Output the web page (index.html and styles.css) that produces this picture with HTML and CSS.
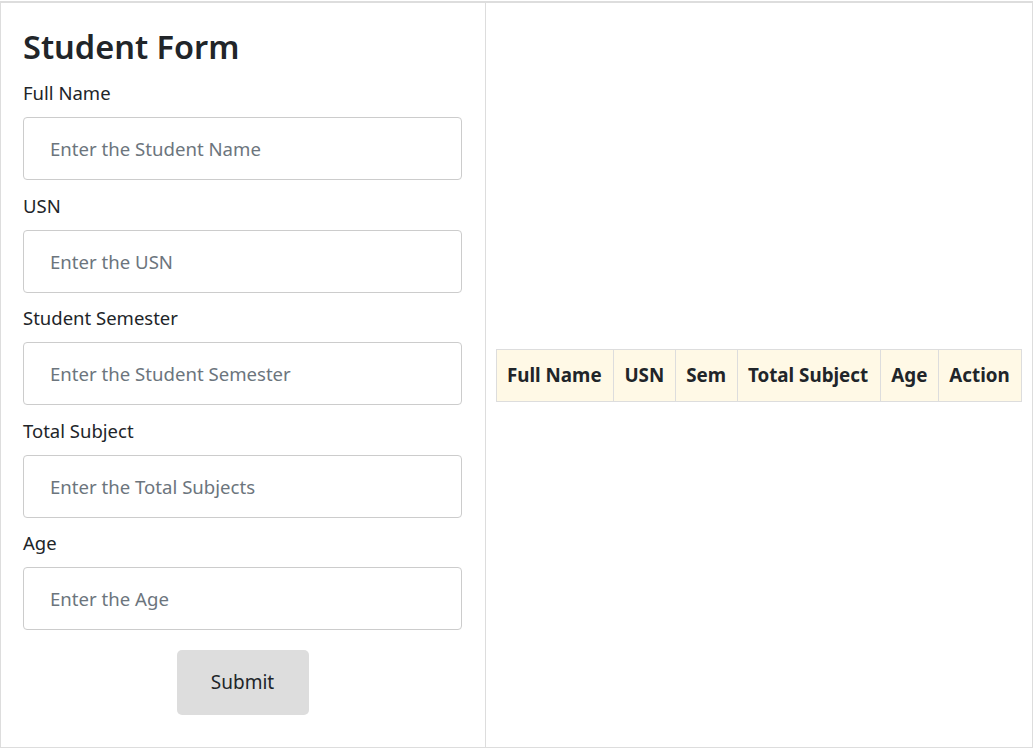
FILE: index.html
```html
<!DOCTYPE html>
<html>
<head>
<meta charset="utf-8">
<link rel="stylesheet" href="styles.css">
</head>
<body>
<div class="app">
  <div class="form-col">
    <h1 class="title">Student Form</h1>
    <div class="field">
      <label class="label">Full Name</label>
      <input class="input" type="text" placeholder="Enter the Student Name">
    </div>
    <div class="field">
      <label class="label">USN</label>
      <input class="input" type="text" placeholder="Enter the USN">
    </div>
    <div class="field">
      <label class="label">Student Semester</label>
      <input class="input" type="text" placeholder="Enter the Student Semester">
    </div>
    <div class="field">
      <label class="label">Total Subject</label>
      <input class="input" type="text" placeholder="Enter the Total Subjects">
    </div>
    <div class="field">
      <label class="label">Age</label>
      <input class="input" type="text" placeholder="Enter the Age">
    </div>
    <div class="actions">
      <button class="btn">Submit</button>
    </div>
  </div>
  <div class="table-col">
    <table class="table">
      <thead>
        <tr>
          <th>Full Name</th>
          <th>USN</th>
          <th>Sem</th>
          <th>Total Subject</th>
          <th>Age</th>
          <th>Action</th>
        </tr>
      </thead>
    </table>
  </div>
</div>
</body>
</html>
```
FILE: styles.css
```css
* { box-sizing: border-box; }
html, body { margin: 0; padding: 0; background: #fff; }
body {
  font-family: "Noto Sans", "Open Sans", sans-serif;
  color: #212529;
}
.app {
  margin-top: 1px;
  width: 1033px;
  height: 747px;
  border: 1px solid #ddd;
  border-top-width: 2px;
  display: flex;
}
.form-col {
  width: 485px;
  border-right: 1px solid #ddd;
  padding: 22px 23px 0 22px;
  display: flex;
  flex-direction: column;
}
.title {
  margin: 0 0 12px 0;
  font-size: 32.5px;
  font-weight: 600;
  line-height: 44px;
  color: #212529;
}
.field {
  display: flex;
  flex-direction: column;
  margin-bottom: 13.5px;
}
.label {
  font-size: 18.5px;
  line-height: 24px;
  margin-bottom: 12px;
}
.input {
  height: 63px;
  width: 439px;
  border: 1px solid #ccc;
  border-radius: 4px;
  padding: 0 26px;
  font-family: inherit;
  font-size: 18.6px;
  color: #212529;
}
.input::placeholder { color: #6c757d; }
.actions {
  display: flex;
  justify-content: center;
  padding-top: 6px;
}
.btn {
  width: 132px;
  height: 65px;
  border: none;
  border-radius: 5px;
  background: #ddd;
  font-family: inherit;
  font-size: 19px;
  color: #212529;
}
.table-col {
  flex: 1;
  display: flex;
  align-items: center;
  padding: 0 10px;
}
.table {
  border-collapse: collapse;
  width: 100%;
}
.table th {
  background: #fff9e6;
  border: 1px solid #ddd;
  height: 52px;
  padding: 0 10px;
  font-size: 18.8px;
  font-weight: 700;
  text-align: left;
  white-space: nowrap;
}
```
